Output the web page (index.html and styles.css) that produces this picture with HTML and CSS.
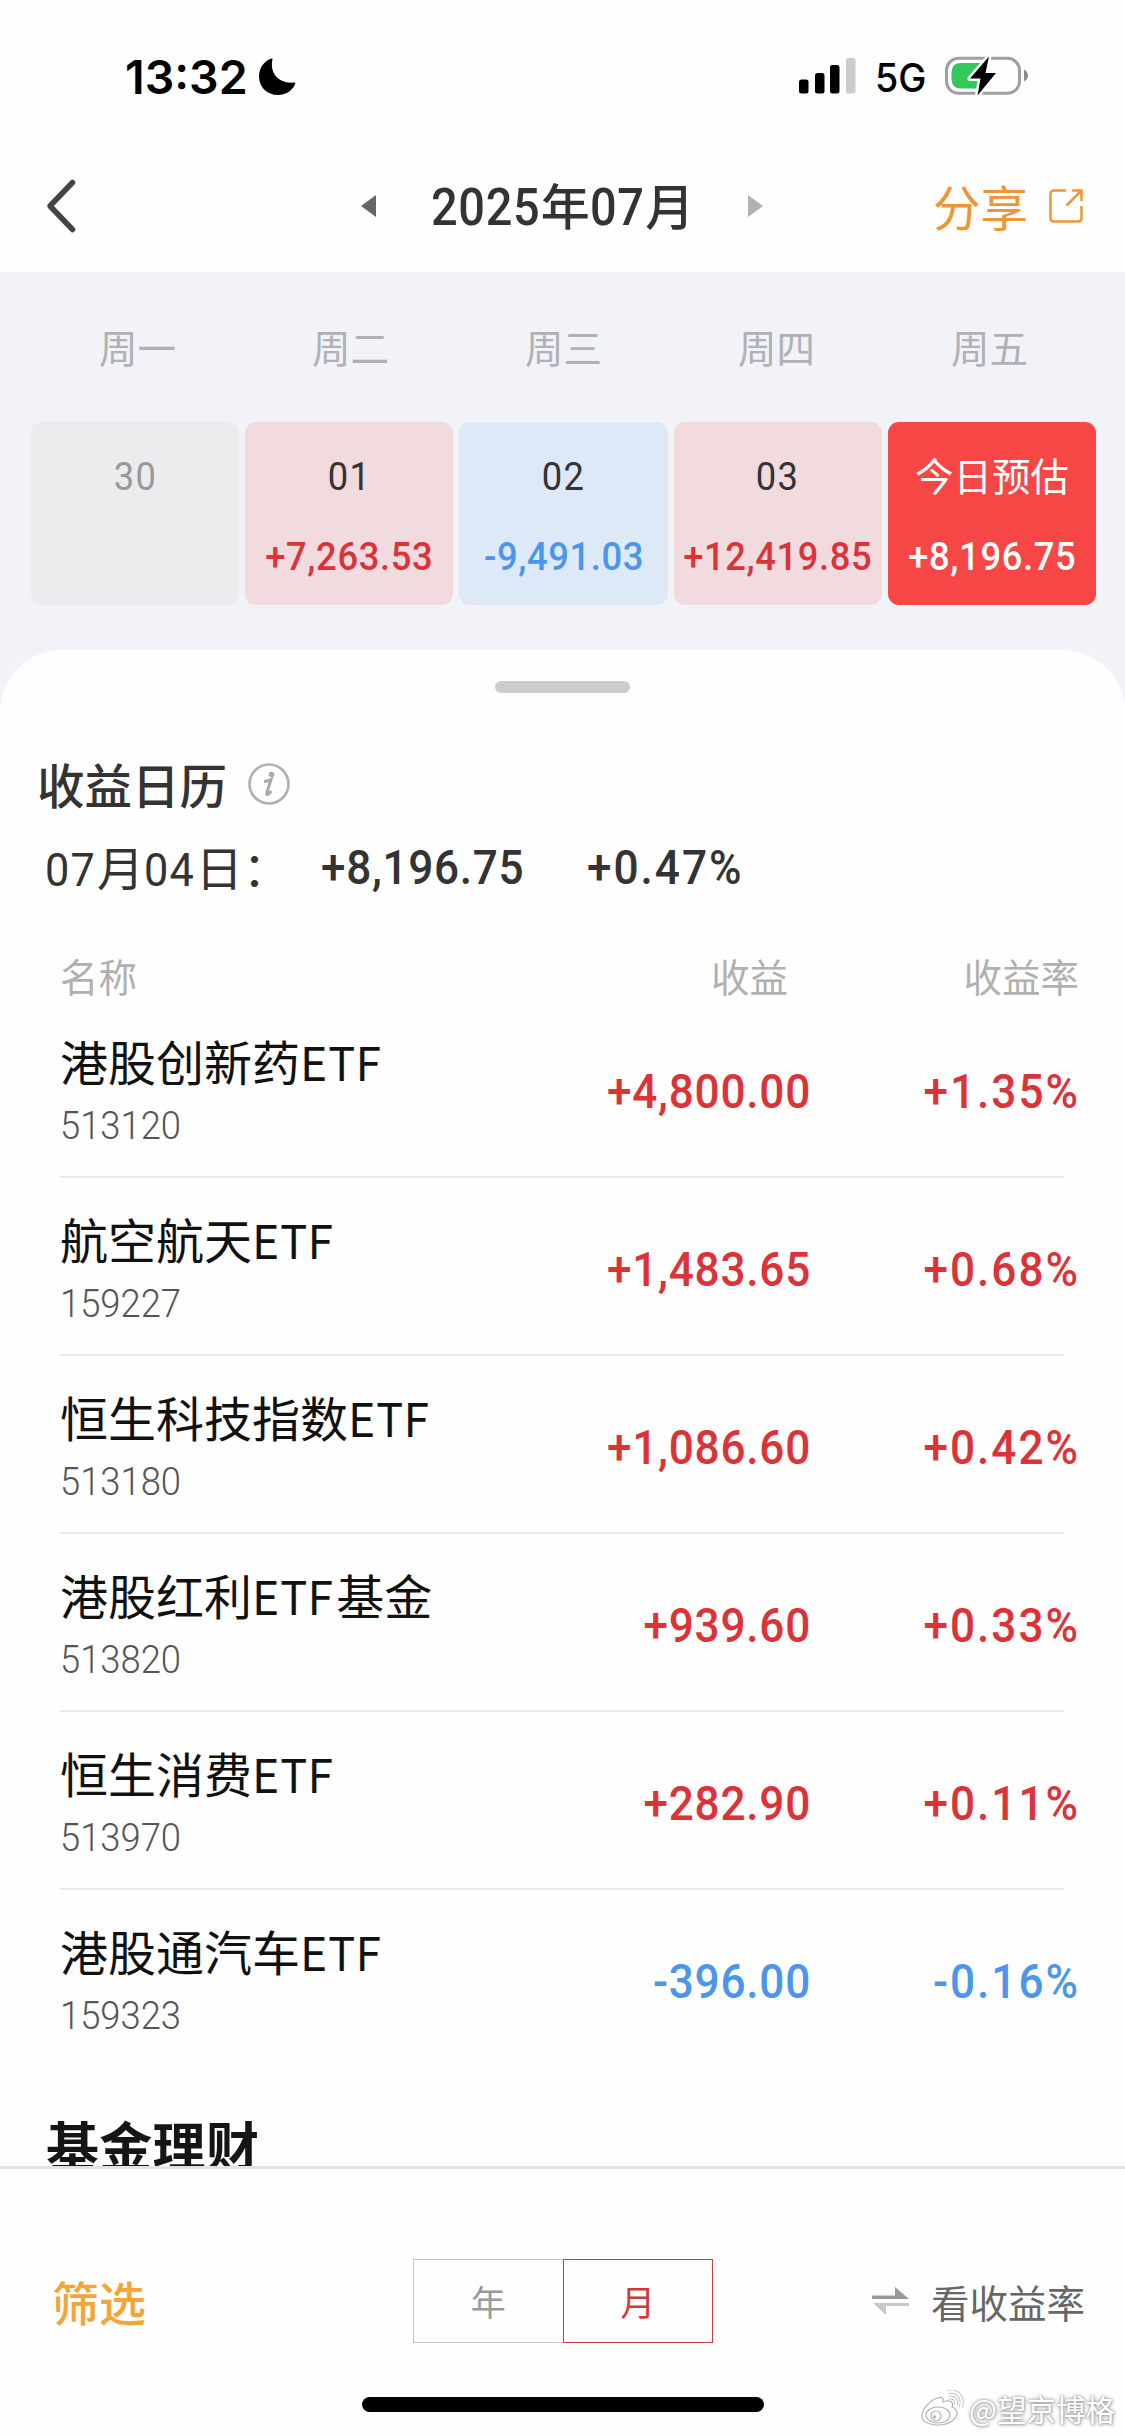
FILE: index.html
```html
<!DOCTYPE html>
<html lang="zh-CN">
<head>
<meta charset="utf-8">
<title>收益日历</title>
<link rel="stylesheet" href="styles.css">
</head>
<body>
<div class="screen">
  <header class="status">
    <div class="status-left">
      <span class="clock">13:32</span>
      <svg class="moon" width="38" height="38" viewBox="0 0 38 38"><path d="M14.500 1C11.500 15 20 26 36.500 24.500C37.500 24.500 37.500 25.500 37 26.500C33.500 33.500 27 37 20 37C9 37 1 29 1 18.500C1 10 6 3 13 .7C14 .4 14.700.3 14.500 1Z"/></svg>
    </div>
    <div class="status-right">
      <svg class="signal" width="58" height="36" viewBox="0 0 58 36"><rect x="0" y="21.500" width="9.500" height="14" rx="2.500"/><rect x="16" y="15" width="9.500" height="20.500" rx="2.500"/><rect x="31" y="7" width="9.500" height="28.500" rx="2.500"/><rect x="47" y="0" width="9.500" height="35.500" rx="2.500" fill="#ccc"/></svg>
      <span class="net">5G</span>
      <svg class="battery" width="84" height="42" viewBox="0 0 84 42"><rect x="1.500" y="3.300" width="73" height="35" rx="12" fill="none" stroke="#a0a0a0" stroke-width="3"/><path d="M16 8H40V33.500H16Q6.500 33.500 6.500 24V17.500Q6.500 8 16 8Z" fill="#34c759"/><path d="M79 14.500Q83 17 83 20.500T79 26.500Z" fill="#8a8a8a"/><path d="M44 1.500L25 23.500H35.500L32.500 40.500L51 18H40.500Z" fill="#000" stroke="#fff" stroke-width="5" stroke-linejoin="round" paint-order="stroke"/></svg>
    </div>
  </header>

  <nav class="nav">
    <svg class="back" width="32" height="56" viewBox="0 0 32 56"><path d="M26.500 4.500L4 28L26.500 51.500" fill="none" stroke="#444" stroke-width="5.500" stroke-linecap="round" stroke-linejoin="round"/></svg>
    <div class="month">
      <svg width="15" height="22" viewBox="0 0 15 22"><path d="M15 0V22L0 11Z" fill="#666"/></svg>
      <h1 class="month-title"><span class="din d4">2025</span>年<span class="din d2">07</span>月</h1>
      <svg width="15" height="22" viewBox="0 0 15 22"><path d="M0 0V22L15 11Z" fill="#b2b2b2"/></svg>
    </div>
    <div class="share">
      <span>分享</span>
      <svg width="36" height="36" viewBox="0 0 36 36" fill="none" stroke="#ee9535" stroke-width="2.500"><path d="M18 2.500H6Q2.500 2.500 2.500 6V30Q2.500 33.500 6 33.500H30Q33.500 33.500 33.500 30V18M24 2.500H33.500V13M33.500 2.500L18.500 17.500"/></svg>
    </div>
  </nav>

  <section class="calendar">
    <div class="weekdays"><span>周一</span><span>周二</span><span>周三</span><span>周四</span><span>周五</span></div>
    <div class="days">
      <div class="day past"><span class="date din">30</span></div>
      <div class="day gain"><span class="date din">01</span><span class="amount din">+7,263.53</span></div>
      <div class="day loss"><span class="date din">02</span><span class="amount din">-9,491.03</span></div>
      <div class="day gain"><span class="date din">03</span><span class="amount din">+12,419.85</span></div>
      <div class="day today"><span class="date">今日预估</span><span class="amount din">+8,196.75</span></div>
    </div>
  </section>

  <main class="sheet">
    <div class="handle"></div>
    <div class="sheet-title">
      <h2>收益日历</h2>
      <svg width="42" height="42" viewBox="0 0 42 42"><circle cx="21" cy="21" r="19.500" fill="none" stroke="#b0b0b0" stroke-width="2.600"/><circle cx="23.500" cy="11.500" r="2.800" fill="#aaa"/><path d="M16 18.500Q20.500 18 23 16.500L19 29Q18 32.500 20.500 31L23.500 28" fill="none" stroke="#aaa" stroke-width="3"/></svg>
    </div>
    <div class="summary">
      <span class="summary-date"><span class="din d2">07</span>月<span class="din d2">04</span>日：</span>
      <span class="summary-num din">+8,196.75</span>
      <span class="summary-num rate din">+0.47%</span>
    </div>
    <div class="thead"><span>名称</span><span>收益</span><span>收益率</span></div>
    <div class="rows">
      <div class="row up"><div class="fund"><span class="name">港股创新药<span class="din etf">ETF</span></span><span class="code din">513120</span></div><span class="num din">+4,800.00</span><span class="num rate din">+1.35%</span></div>
      <div class="row up"><div class="fund"><span class="name">航空航天<span class="din etf">ETF</span></span><span class="code din">159227</span></div><span class="num din">+1,483.65</span><span class="num rate din">+0.68%</span></div>
      <div class="row up"><div class="fund"><span class="name">恒生科技指数<span class="din etf">ETF</span></span><span class="code din">513180</span></div><span class="num din">+1,086.60</span><span class="num rate din">+0.42%</span></div>
      <div class="row up"><div class="fund"><span class="name">港股红利<span class="din etf">ETF</span>基金</span><span class="code din">513820</span></div><span class="num din">+939.60</span><span class="num rate din">+0.33%</span></div>
      <div class="row up"><div class="fund"><span class="name">恒生消费<span class="din etf">ETF</span></span><span class="code din">513970</span></div><span class="num din">+282.90</span><span class="num rate din">+0.11%</span></div>
      <div class="row down"><div class="fund"><span class="name">港股通汽车<span class="din etf">ETF</span></span><span class="code din">159323</span></div><span class="num din">-396.00</span><span class="num rate din">-0.16%</span></div>
    </div>
    <h2 class="next-title">基金理财</h2>
  </main>

  <footer class="footer">
    <span class="filter">筛选</span>
    <div class="segment"><span class="seg">年</span><span class="seg active">月</span></div>
    <div class="toggle">
      <svg width="37" height="28" viewBox="0 0 37 28"><path d="M0 8.500H23V0L37 12H0Z" fill="#999"/><path d="M37 19H14V28L1 16H37Z" fill="#c8c8c8"/></svg>
      <span>看收益率</span>
    </div>
    <div class="home"></div>
    <div class="watermark">
      <svg width="44" height="36" viewBox="0 0 44 36"><g fill="#fff" stroke="#b4b4b4" stroke-width="1.200"><path d="M17 8C9 10 1 19 1 26C1 32 9 35 17 35C28 35 36 29 36 23C36 19 33 18 31 17C33 12 29 9 22 12C23 8 21 6.500 17 8Z"/><ellipse cx="17" cy="25" rx="12" ry="8"/><circle cx="15" cy="26" r="5"/></g><path d="M27 2C36 0 43 7 40 17M28 7.500C33 7 36 10 35 15" fill="none" stroke="#b4b4b4" stroke-width="4"/><path d="M27 2C36 0 43 7 40 17M28 7.500C33 7 36 10 35 15" fill="none" stroke="#fff" stroke-width="2.500"/><circle cx="13.500" cy="27" r="1.800" fill="#b4b4b4"/></svg>
      <span>@望京博格</span>
    </div>
  </footer>
</div>
</body>
</html>
```

FILE: styles.css
```css
* { box-sizing: border-box; }
body { margin: 0; background: #fff; }
h1, h2 { margin: 0; }
svg { display: block; flex: none; }

.screen {
  width: 1125px;
  height: 2436px;
  overflow: hidden;
  display: flex;
  flex-direction: column;
  background: #fefefe;
  font-family: "Noto Sans CJK SC", sans-serif;
  color: #333;
}

/* Narrow numerals */
.din {
  display: inline-block;
  font-family: Roboto, "Noto Sans CJK SC", sans-serif;
  letter-spacing: .03em;
  white-space: nowrap;
  transform: scaleX(.92);
  transform-origin: left center;
}
.d2 { margin-right: -.08em; }
.d4 { margin-right: -.18em; }

.status {
  height: 150px;
  flex: none;
  display: flex;
  justify-content: space-between;
  padding: 0 96px 0 125px;
}
.status-left { display: flex; }
.clock { font: 600 46.500px/56px Inter, sans-serif; color: #000; margin-top: 49px; width: 133px; white-space: nowrap; }
.moon { margin-top: 58px; }
.status-right { display: flex; color: #000; }
.signal { margin-top: 58px; }
.net { font: 500 40px/48px Inter, sans-serif; margin: 54px 0 0 18px; width: 70px; transform: scaleX(.94); transform-origin: left; }
.battery { margin-top: 55px; }

.nav {
  height: 122px;
  flex: none;
  display: grid;
  grid-template-columns: 315px 1fr 315px;
  align-items: center;
  padding: 0 41px 10px 46px;
}
.month { display: flex; align-items: center; width: 400px; }
.month-title { font-size: 49px; line-height: 70px; font-weight: 500; width: 258px; margin: 0 59px 0 55px; white-space: nowrap; }
.month-title .din { font-size: 51px; letter-spacing: .015em; }
.share { display: flex; justify-content: flex-end; align-items: center; gap: 20px; font-size: 47.500px; line-height: 70px; color: #ee9535; }

.calendar {
  height: 438px;
  flex: none;
  background: #f2f3f8;
  padding: 43px 29px 0 31px;
}
.weekdays { display: grid; grid-template-columns: repeat(5, 1fr); height: 107px; font-size: 38.500px; line-height: 62px; color: #b0b1b6; text-align: center; }
.days { display: grid; grid-template-columns: repeat(5, 1fr); gap: 6px; }
.day { height: 183px; border-radius: 11px; display: flex; flex-direction: column; align-items: center; padding-top: 25px; }
.day .din { transform-origin: center; }
.date { font-size: 38.500px; line-height: 54px; height: 80px; }
.date.din { font-size: 39.500px; line-height: 60px; }
.amount { font-size: 39.500px; line-height: 60px; font-weight: 500; letter-spacing: .017em; }
.past { background: #ebeced; color: #999; }
.gain { background: #f1dbdf; }
.gain .amount { color: #dc3338; }
.loss { background: #dde9f7; }
.loss .amount { color: #4b96ea; }
.today { background: #f74646; color: #fff; }

.sheet {
  flex: none;
  height: 1516px;
  margin-top: -60px;
  background: #fefefe;
  border-radius: 62px 62px 0 0;
  overflow: hidden;
}
.handle { width: 135px; height: 12px; border-radius: 6px; background: #ccc; margin: 31px auto 0; }
.sheet-title { display: flex; align-items: center; gap: 21px; margin: 56px 0 0 37px; height: 70px; }
.sheet-title h2 { font-size: 47.500px; line-height: 70px; font-weight: 500; }
.summary { display: flex; align-items: center; height: 70px; margin: 14px 0 0 45px; font-size: 47px; line-height: 70px; }
.summary-date { width: 276px; white-space: nowrap; }
.summary-num { font-size: 48px; font-weight: 500; width: 266px; letter-spacing: .015em; }
.thead { display: grid; grid-template-columns: 1fr 260px 291px; margin: 41px 46px 0 60px; height: 62px; font-size: 38.500px; line-height: 62px; color: #b0b0b0; }
.thead span + span { text-align: right; }
.row {
  display: grid;
  grid-template-columns: 1fr 260px 270px;
  align-items: center;
  height: 178px;
  margin: 0 61px 0 60px;
  border-bottom: 2px solid #e8e8e8;
}
.rows { margin-top: -6px; }
.row:last-child { border-bottom-color: transparent; }
.fund { display: flex; flex-direction: column; color: #111; padding-top: 4px; }
.name { font-size: 48px; line-height: 66px; white-space: nowrap; }
.etf { margin: 0 -.12em 0 .02em; letter-spacing: .042em; }
.code { font-size: 39.500px; line-height: 56px; color: #555; font-weight: 300; letter-spacing: 0; }
.num { font-size: 48px; font-weight: 500; text-align: right; transform-origin: right center; padding-top: 7px; letter-spacing: .017em; margin-right: -17px; }
.num:nth-child(2) { margin-right: -17px; }
.row .num.rate { margin-right: -16px; }
.rate { letter-spacing: .045em; }
.up .num { color: #dc3338; }
.down .num { color: #4b96ea; }
.next-title { font-size: 53px; line-height: 76px; font-weight: 700; color: #151515; margin: 38px 0 0 46px; letter-spacing: .3px; }

.footer {
  position: relative;
  flex: none;
  height: 270px;
  border-top: 3px solid #e2e2e4;
  background: #fefefe;
  display: grid;
  grid-template-columns: 361px 300px 1fr;
  padding: 90px 40px 0 52px;
}
.filter { font-size: 47px; line-height: 84px; font-weight: 500; color: #f2a63a; }
.segment { display: flex; height: 84px; }
.seg { flex: 1; border: 1px solid #c4c4c4; border-right: 0; text-align: center; font-size: 35px; line-height: 82px; color: #999; }
.seg.active { border: 1px solid #c63d45; color: #d13a3a; }
.toggle { display: flex; justify-content: flex-end; align-items: center; gap: 22px; height: 84px; font-size: 38.500px; line-height: 84px; color: #666; }
.home { position: absolute; left: 362px; top: 228px; width: 402px; height: 15px; border-radius: 8px; background: #000; }
.watermark {
  position: absolute;
  right: 10px;
  top: 217px;
  display: flex;
  align-items: center;
  gap: 4px;
  font-size: 29.500px;
  line-height: 44px;
  color: #fff;
  white-space: nowrap;
  text-shadow: 0 0 2px #999, 0 0 4px #aaa, 1px 1px 3px #bbb;
}
```
